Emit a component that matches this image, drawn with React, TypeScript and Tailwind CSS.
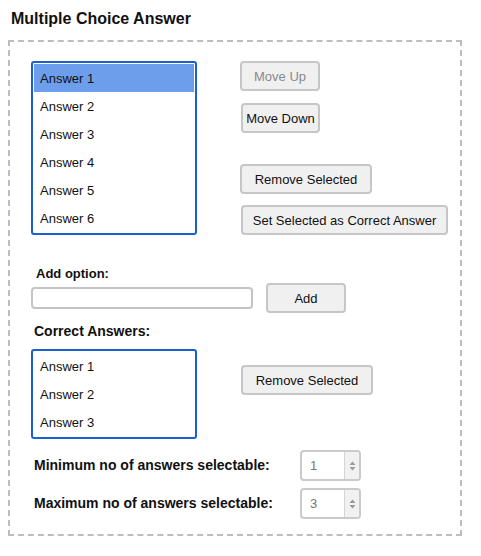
import React from 'react';

const answers = ['Answer 1', 'Answer 2', 'Answer 3', 'Answer 4', 'Answer 5', 'Answer 6'];
const correct = ['Answer 1', 'Answer 2', 'Answer 3'];

const Btn: React.FC<{ label: string; className?: string; disabled?: boolean }> = ({ label, className = '', disabled }) => (
  <button
    disabled={disabled}
    className={`h-[30px] rounded-[4px] border-2 border-[#c6c6c6] bg-[#f0f0f0] text-[13px] leading-none ${disabled ? 'text-[#8a8a8a]' : 'text-[#111]'} ${className}`}
  >
    {label}
  </button>
);

const ListBox: React.FC<{ items: string[]; selected?: number; height: string }> = ({ items, selected, height }) => (
  <div className={`w-[166px] ${height} rounded-[3px] border-2 border-[#1b5fd2] bg-white p-px`}>
    {items.map((a, i) => (
      <div
        key={a}
        className={`flex h-[28px] items-center pl-[6px] pt-px text-[13px] text-[#111] ${i === selected ? 'bg-[#6d9eeb]' : ''}`}
      >
        {a}
      </div>
    ))}
  </div>
);

const Spin: React.FC<{ value: string }> = ({ value }) => (
  <div className="flex h-[31px] w-[61px] overflow-hidden rounded-[4px] border-2 border-[#cacaca] bg-white">
    <div className="flex flex-1 items-center pl-[8px] text-[13px] text-[#777]">{value}</div>
    <div className="flex w-[15px] items-center justify-center border-l border-[#d4d4d4] bg-[#f1f1f1]">
      <svg width="7" height="10" viewBox="0 0 7 10">
        <path d="M3.5 0.5 L6.5 4 L0.5 4 Z" fill="#9a9a9a" />
        <path d="M3.5 9.5 L6.5 6 L0.5 6 Z" fill="#9a9a9a" />
      </svg>
    </div>
  </div>
);

const App: React.FC = () => {
  return (
    <div className="min-h-screen bg-white text-[#111]" style={{ fontFamily: '"Liberation Sans", Arial, sans-serif' }}>
      <div className="pl-[11px] pt-[9px] text-[16px] font-bold leading-[20px]">Multiple Choice Answer</div>

      <div className="ml-[8px] mt-[11px] w-[454px] border-2 border-dashed border-[#bdbdbd] pb-[15px] pl-[21px] pt-[19px]">
        {/* options list + actions */}
        <div className="flex gap-[43px]">
          <ListBox items={answers} selected={0} height="h-[174px]" />
          <div className="flex flex-col items-start">
            <Btn label="Move Up" disabled className="w-[80px]" />
            <Btn label="Move Down" className="ml-px mt-[12px] w-[79px]" />
            <Btn label="Remove Selected" className="mt-[31px] w-[132px]" />
            <Btn label="Set Selected as Correct Answer" className="ml-px mt-[11px] w-[207px]" />
          </div>
        </div>

        {/* add option */}
        <div className="ml-[5px] mt-[31px] text-[13px] font-bold leading-[16px]">Add option:</div>
        <div className="mt-px flex items-center">
          <input className="h-[22px] w-[222px] rounded-[4px] border-2 border-[#c4c4c4] bg-white outline-none" />
          <Btn label="Add" className="ml-[13px] w-[80px]" />
        </div>

        {/* correct answers */}
        <div className="ml-[3px] mt-[10px] text-[14px] font-bold leading-[17px]">Correct Answers:</div>
        <div className="mt-[9px] flex items-start gap-[44px]">
          <ListBox items={correct} height="h-[90px]" />
          <Btn label="Remove Selected" className="mt-[16px] w-[132px]" />
        </div>

        <div className="mt-[11px] flex items-center">
          <div className="ml-[3px] w-[266px] text-[14px] font-bold">Minimum no of answers selectable:</div>
          <Spin value="1" />
        </div>
        <div className="mt-[7px] flex items-center">
          <div className="ml-[3px] w-[266px] text-[14px] font-bold">Maximum no of answers selectable:</div>
          <Spin value="3" />
        </div>
      </div>
    </div>
  );
};

export default App;
